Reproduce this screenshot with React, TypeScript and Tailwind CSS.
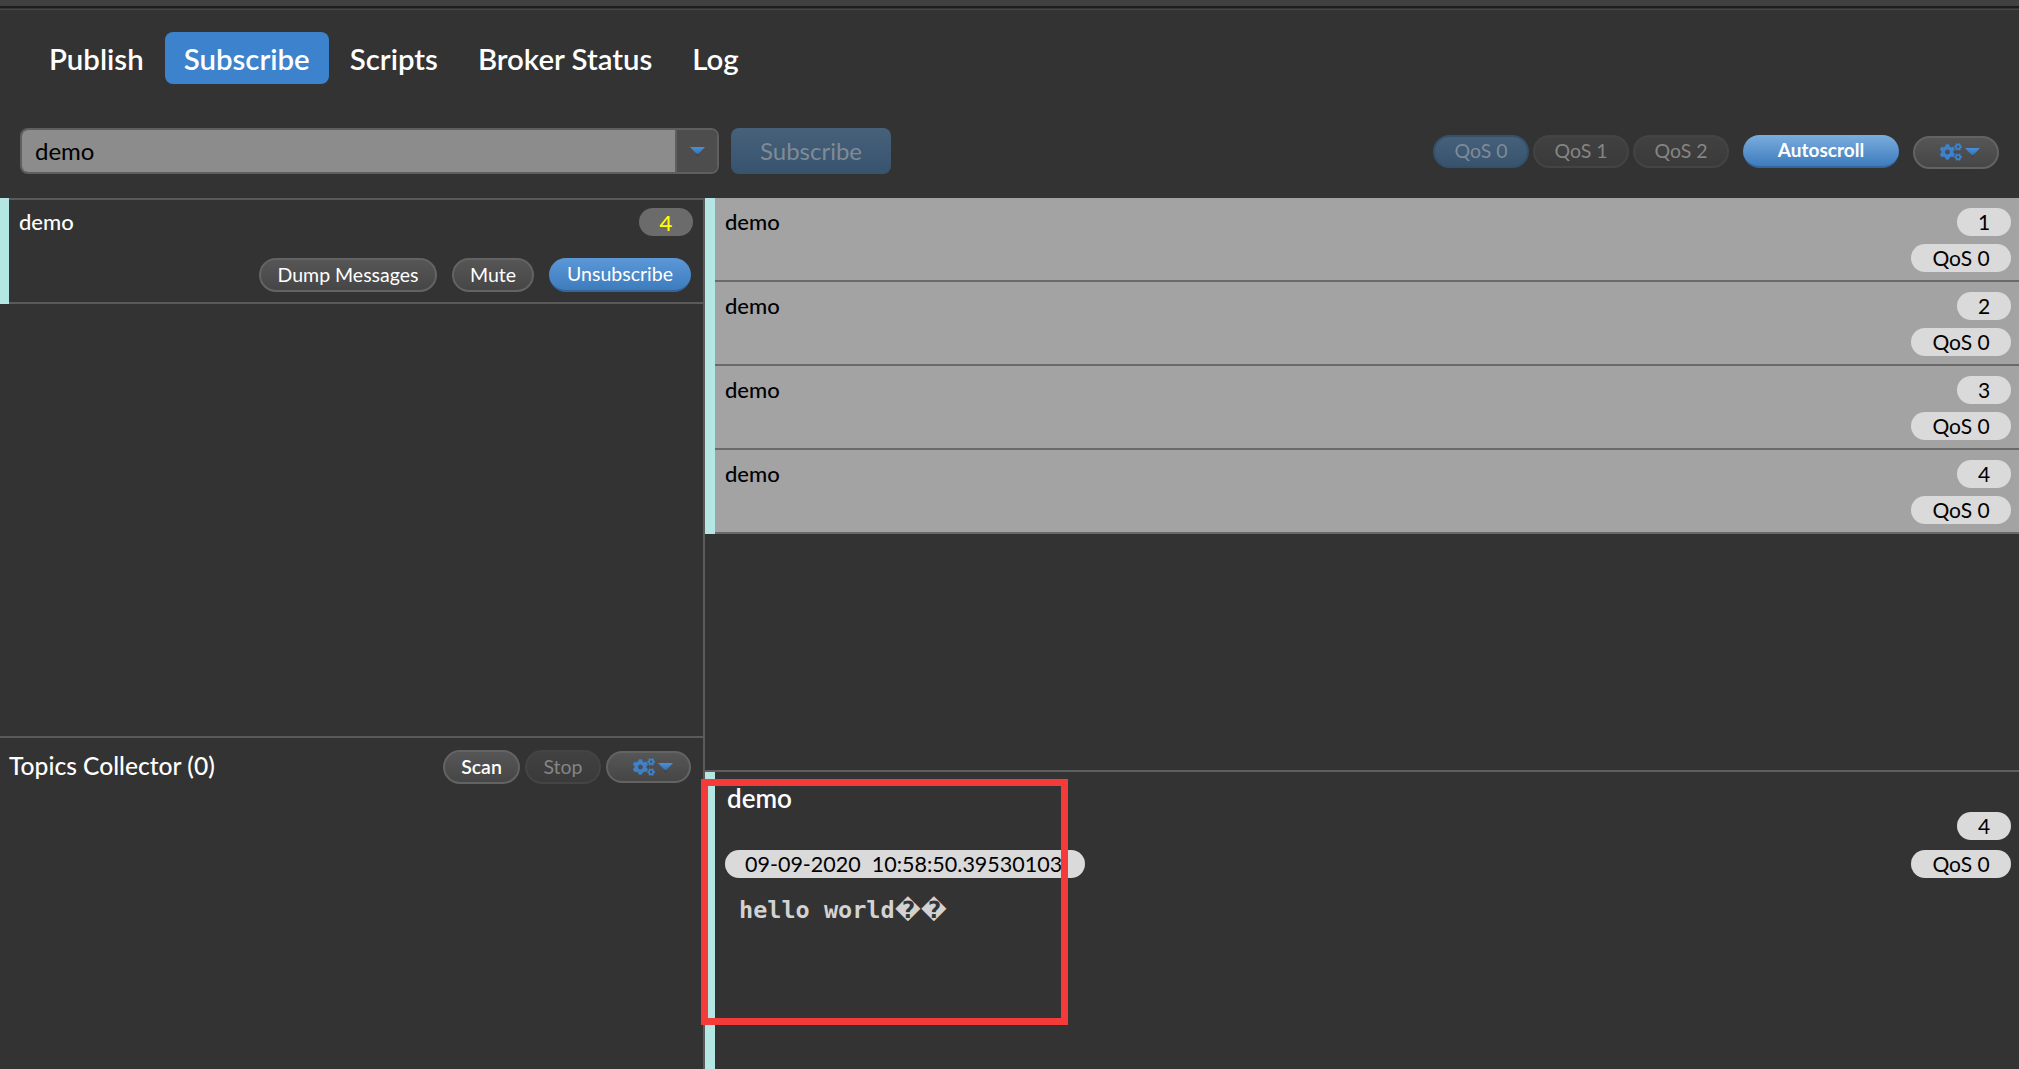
import React from 'react';
import { FaCogs } from 'react-icons/fa';

function Caret() {
  return (
    <svg width="15" height="9" viewBox="0 0 15 9" className="shrink-0">
      <defs>
        <linearGradient id="caret-fill" x1="0" y1="0" x2="0" y2="1">
          <stop offset="0" stopColor="#4a90d9" />
          <stop offset="1" stopColor="#2f6fb0" />
        </linearGradient>
      </defs>
      <path d="M4 3 L11 3 L7.5 9 Z" fill="#222" />
      <path d="M0 0 L15 0 L7.5 8 Z" fill="url(#caret-fill)" />
    </svg>
  );
}

function GearButton({ className }: { className: string }) {
  return (
    <button className={`flex items-center justify-center gap-[3px] rounded-full border-2 border-[#636363] bg-gradient-to-b from-[#565656] to-[#464646] pl-2 ${className}`}>
      <FaCogs className="h-[18px] w-[22px] text-[#3d82cc]" />
      <Caret />
    </button>
  );
}

function PillButton({ label, className }: { label: string; className: string }) {
  return (
    <button className={`flex h-[34px] items-center justify-center rounded-full border-2 border-[#636363] bg-gradient-to-b from-[#565656] to-[#464646] text-[19.5px] text-white ${className}`}>
      {label}
    </button>
  );
}

function QosToggle({ label, active }: { label: string; active?: boolean }) {
  return (
    <button
      className={
        active
          ? 'flex h-[33px] w-[96px] items-center justify-center rounded-full border-2 border-[#34506c] bg-gradient-to-b from-[#46607a] to-[#38536e] text-[19.5px] text-[#7f8b96]'
          : 'flex h-[33px] w-[96px] items-center justify-center rounded-full border-2 border-[#444444] bg-gradient-to-b from-[#414141] to-[#3a3a3a] text-[19.5px] text-[#858585]'
      }
    >
      {label}
    </button>
  );
}

function MessageRow({ topic, index }: { topic: string; index: number }) {
  return (
    <div className="flex h-[84px] flex-col border-b-2 border-[#6a6a6a] bg-[#a3a3a3] pl-[10px] pr-2 text-black">
      <div className="mt-[10px] flex h-[28px] items-center justify-between">
        <span className="pb-[2px] text-[22px] font-medium">{topic}</span>
        <span className="flex h-[28px] w-[54px] items-center justify-center rounded-full bg-[#dadada] text-[21px]">{index}</span>
      </div>
      <div className="mt-2 flex justify-end">
        <span className="flex h-[28px] w-[100px] items-center justify-center rounded-full bg-[#dadada] text-[21px]">QoS 0</span>
      </div>
    </div>
  );
}

const tabs = ['Publish', 'Subscribe', 'Scripts', 'Broker Status', 'Log'];

export default function App() {
  return (
    <div className="relative flex h-[1069px] w-[2019px] flex-col overflow-hidden bg-[#333333] font-['Lato',sans-serif]">
      {/* Browser chrome remains at the very top */}
      <div className="h-[6px] bg-[#404040]" />
      <div className="h-[2px] bg-[#1c1c1c]" />
      <div className="h-[1px] bg-[#333333]" />
      <div className="h-[1px] bg-[#484848]" />

      {/* Main tabs */}
      <nav className="mt-[22px] flex h-[52px] gap-[2px] pl-[30px]">
        {tabs.map((tab) => (
          <a
            key={tab}
            className={`flex items-center rounded-[8px] px-[19px] pt-[2px] text-[29.4px] font-semibold text-white ${tab === 'Subscribe' ? 'bg-[#3d82cc]' : ''}`}
          >
            {tab}
          </a>
        ))}
      </nav>

      {/* Subscribe toolbar */}
      <div className="mt-[44px] flex h-[46px] items-center pl-5 pr-5">
        <div className="flex h-[46px] w-[699px] overflow-hidden rounded-[8px] border-2 border-[#5f5f5f]">
          <div className="flex flex-1 items-center bg-[#8c8c8c] pl-[13px] text-[24px] text-black">demo</div>
          <div className="flex w-[42px] items-center justify-center border-l-2 border-[#5f5f5f] bg-[#4d4d4d]">
            <Caret />
          </div>
        </div>
        <button className="ml-[12px] flex h-[46px] w-[160px] items-center justify-center rounded-[8px] bg-gradient-to-b from-[#47617b] to-[#38536e] text-[24px] text-[#7f8b96]">
          Subscribe
        </button>
        <div className="ml-auto flex items-center">
          <div className="flex gap-1">
            <QosToggle label="QoS 0" active />
            <QosToggle label="QoS 1" />
            <QosToggle label="QoS 2" />
          </div>
          <button className="ml-[14px] flex h-[33px] w-[156px] items-center justify-center rounded-full border-b-2 border-[#34669c] bg-gradient-to-b from-[#7badde] to-[#3d7cbd] text-[19px] font-bold text-white">
            Autoscroll
          </button>
          <GearButton className="ml-[14px] mt-[2px] h-[33px] w-[86px]" />
        </div>
      </div>

      {/* Panels */}
      <div className="mt-[24px] flex min-h-0 flex-1">
        {/* Left column */}
        <div className="flex w-[705px] flex-col border-r-2 border-[#5a5a5a]">
          <div className="flex h-[538px] flex-col">
            <div className="flex h-[106px]">
              <div className="w-[9px] bg-[#b4e6e4]" />
              <div className="flex flex-1 flex-col border-y-2 border-[#5a5a5a] pl-[10px] pr-[10px]">
                <div className="mt-2 flex h-[28px] items-center justify-between">
                  <span className="pb-[2px] text-[22px] font-medium text-white">demo</span>
                  <span className="flex h-[28px] w-[54px] items-center justify-center rounded-full bg-[#6b6b6b] text-[22px] font-medium text-[#ffff00]">4</span>
                </div>
                <div className="mt-[22px] flex justify-end gap-[15px] pr-[2px]">
                  <PillButton label="Dump Messages" className="w-[178px]" />
                  <PillButton label="Mute" className="w-[82px]" />
                  <button className="flex h-[34px] w-[142px] items-center justify-center rounded-full border-b-2 border-[#34669c] bg-gradient-to-b from-[#5c98d8] to-[#3d7cbd] text-[19.5px] text-white">
                    Unsubscribe
                  </button>
                </div>
              </div>
            </div>
          </div>
          <div className="flex-1 border-t-2 border-[#5a5a5a]">
            <div className="mt-[12px] flex h-[34px] items-center justify-between pl-[9px] pr-[12px]">
              <span className="pb-[2px] text-[24.6px] font-medium leading-none text-white">Topics Collector (0)</span>
              <div className="flex items-center gap-[5px]">
                <PillButton label="Scan" className="w-[77px] font-semibold" />
                <button className="flex h-[34px] w-[76px] items-center justify-center rounded-full border-2 border-[#444444] bg-gradient-to-b from-[#414141] to-[#3a3a3a] text-[19.5px] text-[#858585]">
                  Stop
                </button>
                <GearButton className="h-[32px] w-[85px]" />
              </div>
            </div>
          </div>
        </div>

        {/* Right column */}
        <div className="flex min-w-0 flex-1 flex-col">
          <div className="flex h-[572px] flex-col">
            <div className="flex">
              <div className="w-[10px] bg-[#b4e6e4]" />
              <div className="flex-1">
                <MessageRow topic="demo" index={1} />
                <MessageRow topic="demo" index={2} />
                <MessageRow topic="demo" index={3} />
                <MessageRow topic="demo" index={4} />
              </div>
            </div>
          </div>
          <div className="flex flex-1 flex-col">
            <div className="h-[2px] bg-[#5f5f5f]" />
            <div className="flex flex-1">
              <div className="w-[10px] bg-[#b4e6e4]" />
              <div className="flex-1 pl-[10px] pr-2 text-black">
                <div className="mt-[10px] h-[32px] pl-[2px] text-[26px] font-semibold leading-[32px] text-white">demo</div>
                <div className="-mt-[2px] flex justify-end">
                  <span className="flex h-[28px] w-[54px] items-center justify-center rounded-full bg-[#dadada] text-[21px]">4</span>
                </div>
                <div className="mt-[10px] flex items-center justify-between">
                  <span className="flex h-[28px] w-[360px] items-center whitespace-pre rounded-full bg-[#dadada] pl-[20px] text-[21.5px]">09-09-2020  10:58:50.39530103</span>
                  <span className="flex h-[28px] w-[100px] items-center justify-center rounded-full bg-[#dadada] text-[21px]">QoS 0</span>
                </div>
                <pre className="mt-[17px] pl-[14px] font-['DejaVu_Sans_Mono',monospace] text-[23.5px] font-bold leading-[30px] text-[#d2d2d2]">
                  hello world<span className="font-['DejaVu_Sans',sans-serif]">��</span>
                </pre>
              </div>
            </div>
          </div>
        </div>
      </div>

      {/* Red annotation drawn over the screenshot */}
      <div className="absolute left-[701px] top-[779px] h-[246px] w-[367px] border-[7px] border-[#f53a3a]" />
    </div>
  );
}
